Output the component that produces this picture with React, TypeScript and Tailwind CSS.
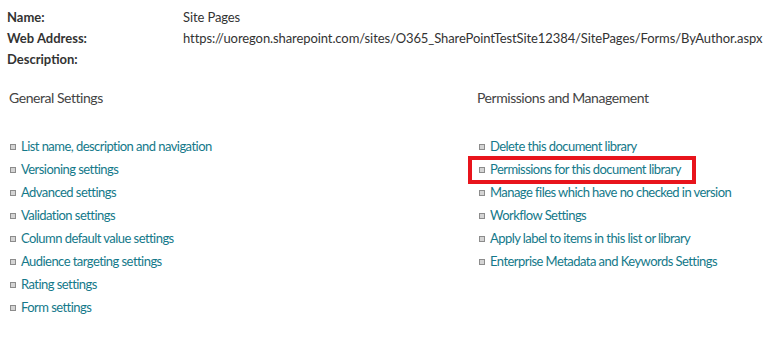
import React from 'react';

const general = [
  'List name, description and navigation',
  'Versioning settings',
  'Advanced settings',
  'Validation settings',
  'Column default value settings',
  'Audience targeting settings',
  'Rating settings',
  'Form settings',
];

const permissions = [
  'Delete this document library',
  'Permissions for this document library',
  'Manage files which have no checked in version',
  'Workflow Settings',
  'Apply label to items in this list or library',
  'Enterprise Metadata and Keywords Settings',
];

const Bullet: React.FC = () => (
  <span className="inline-block w-[6px] h-[6px] border border-[#8c8c8c] bg-[#d4d4d4] shrink-0" />
);

const SettingsList: React.FC<{ items: string[]; highlight?: number }> = ({ items, highlight }) => (
  <ul className="flex flex-col">
    {items.map((item, idx) => (
      <li key={idx} className="relative h-[23px] flex items-center gap-[5px]">
        <Bullet />
        <a className="text-[#14798a] text-[13px] tracking-[-0.55px] leading-none cursor-pointer">{item}</a>
        {idx === highlight && (
          <div className="absolute left-[-11px] top-[-2px] w-[228px] h-[28px] border-4 border-[#e8141c] pointer-events-none"></div>
        )}
      </li>
    ))}
  </ul>
);

export default function App() {
  return (
    <div className="w-[783px] h-[349px] bg-white text-[#333] font-['Lato','Liberation_Sans',sans-serif] pt-[7px]">
      {/* Header info */}
      <div className="pl-[7px] text-[13px]">
        <div className="h-[21px] flex items-center">
          <span className="w-[176px] font-bold">Name:</span>
          <span className="tracking-[-0.1px]">Site Pages</span>
        </div>
        <div className="h-[21px] flex items-center">
          <span className="w-[176px] font-bold">Web Address:</span>
          <span className="tracking-[-0.09px]">https://uoregon.sharepoint.com/sites/O365_SharePointTestSite12384/SitePages/Forms/ByAuthor.aspx</span>
        </div>
        <div className="h-[21px] flex items-center">
          <span className="w-[176px] font-bold">Description:</span>
        </div>
      </div>

      {/* Settings columns */}
      <div className="grid grid-cols-[470px_1fr] mt-[17px]">
        <div className="pl-[9px]">
          <h2 className="h-[20px] flex items-center text-[14px] tracking-[-0.45px] text-[#444]">General Settings</h2>
          <div className="mt-[28px] pl-[1px]">
            <SettingsList items={general} />
          </div>
        </div>
        <div className="pl-[7px]">
          <h2 className="h-[20px] flex items-center text-[14px] tracking-[-0.45px] text-[#444]">Permissions and Management</h2>
          <div className="mt-[28px] pl-[2px]">
            <SettingsList items={permissions} highlight={1} />
          </div>
        </div>
      </div>
    </div>
  );
}
